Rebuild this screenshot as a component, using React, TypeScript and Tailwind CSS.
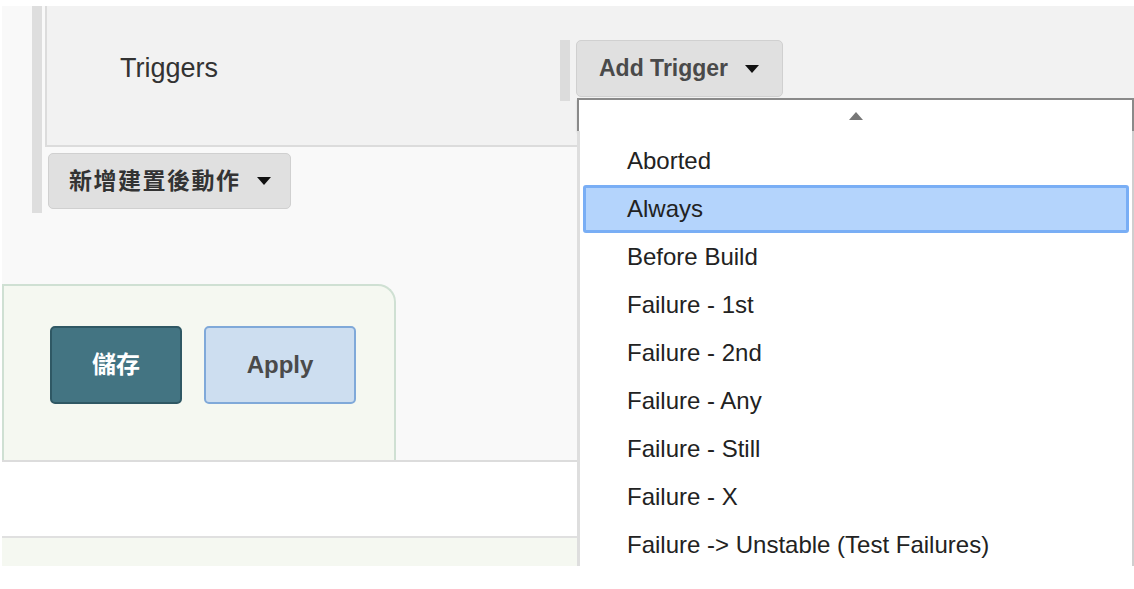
import React from "react";

const triggers = [
  "Aborted",
  "Always",
  "Before Build",
  "Failure - 1st",
  "Failure - 2nd",
  "Failure - Any",
  "Failure - Still",
  "Failure - X",
  "Failure -> Unstable (Test Failures)",
];

function Caret({ up = false, className = "" }: { up?: boolean; className?: string }) {
  return (
    <svg width="14" height="8" viewBox="0 0 14 8" className={className}>
      <path d={up ? "M0 8h14L7 0z" : "M0 0h14L7 8z"} fill="currentColor" />
    </svg>
  );
}

export default function App() {
  return (
    <div className="w-[1134px] h-[589px] bg-white pt-[6px] pl-[2px] font-['Liberation_Sans','Noto_Sans_CJK_TC',sans-serif] overflow-hidden">
      <div className="relative w-[1132px] h-[560px] bg-[#f9f9f9] overflow-hidden">
        {/* post-build section */}
        <div className="flex pl-[30px]">
          <div className="w-[10px] h-[207px] bg-[#dedede]" />
          <div className="ml-[3px] flex-1 flex flex-col">
            <div className="h-[141px] bg-[#f2f2f2] border-l-2 border-b-2 border-[#dcdcdc] flex items-start pt-[34px]">
              <div className="w-[513px] h-[57px] pl-[73px] flex items-center text-[27px] text-[#333]">
                Triggers
              </div>
              <div className="w-[10px] h-[61px] bg-[#dcdcdc]" />
              <button className="ml-[6px] h-[57px] w-[207px] rounded-[5px] border border-[#d0d0d0] bg-[#e0e0e0] pl-[22px] flex items-center text-[23px] font-bold text-[#4a4a4a]">
                Add Trigger
                <Caret className="ml-[17px] text-[#111]" />
              </button>
            </div>
            <div className="mt-[6px] ml-[3px]">
              <button className="h-[56px] w-[243px] rounded-[5px] border border-[#d0d0d0] bg-[#e0e0e0] pl-[20px] flex items-center text-[23px] font-bold text-[#333] tracking-[1.5px]">
                新增建置後動作
                <Caret className="ml-[16px] text-[#111]" />
              </button>
            </div>
          </div>
        </div>

        {/* save / apply bar */}
        <div className="mt-[71px] w-[394px] h-[176px] bg-[#f5f8f1] border-t-2 border-l-2 border-r-2 border-[#cfe0d3] rounded-tr-[18px] flex items-start gap-[22px] pt-[40px] pl-[46px]">
          <button className="w-[132px] h-[78px] rounded-[5px] border-2 border-[#2f5864] bg-[#437482] text-white text-[24px] font-bold">
            儲存
          </button>
          <button className="w-[152px] h-[78px] rounded-[5px] border-2 border-[#80a9d9] bg-[#cddef0] text-[#4a4a4a] text-[24px] font-bold">
            Apply
          </button>
        </div>
        <div className="h-[2px] bg-[#dcdcdc]" />
        <div className="h-[74px] bg-white" />
        <div className="h-[2px] bg-[#e0e0e0]" />
        <div className="h-[40px] bg-[#f5f8f1]" />

        {/* trigger dropdown */}
        <div className="absolute left-[575px] top-[92px] w-[557px] h-[480px] flex flex-col">
          <div className="h-[33px] shrink-0 bg-white border-t-2 border-l-2 border-r-2 border-[#8a8a8a] shadow-[0_2px_2px_rgba(0,0,0,0.12)] flex items-center justify-center text-[#777]">
            <Caret up />
          </div>
          <div className="flex-1 bg-white border-l-[3px] border-r-2 border-l-[#dedede] border-r-[#cfcfcf] pt-[6px] pl-[3px] pr-[3px]">
            {triggers.map((t) =>
              t === "Always" ? (
                <div
                  key={t}
                  className="h-[48px] rounded-[3px] border-[3px] border-[#79aef5] bg-[#b4d4fc] pl-[41px] flex items-center text-[24px] text-[#222]"
                >
                  {t}
                </div>
              ) : (
                <div key={t} className="h-[48px] pl-[44px] flex items-center text-[24px] text-[#222]">
                  {t}
                </div>
              )
            )}
          </div>
        </div>
      </div>
    </div>
  );
}
